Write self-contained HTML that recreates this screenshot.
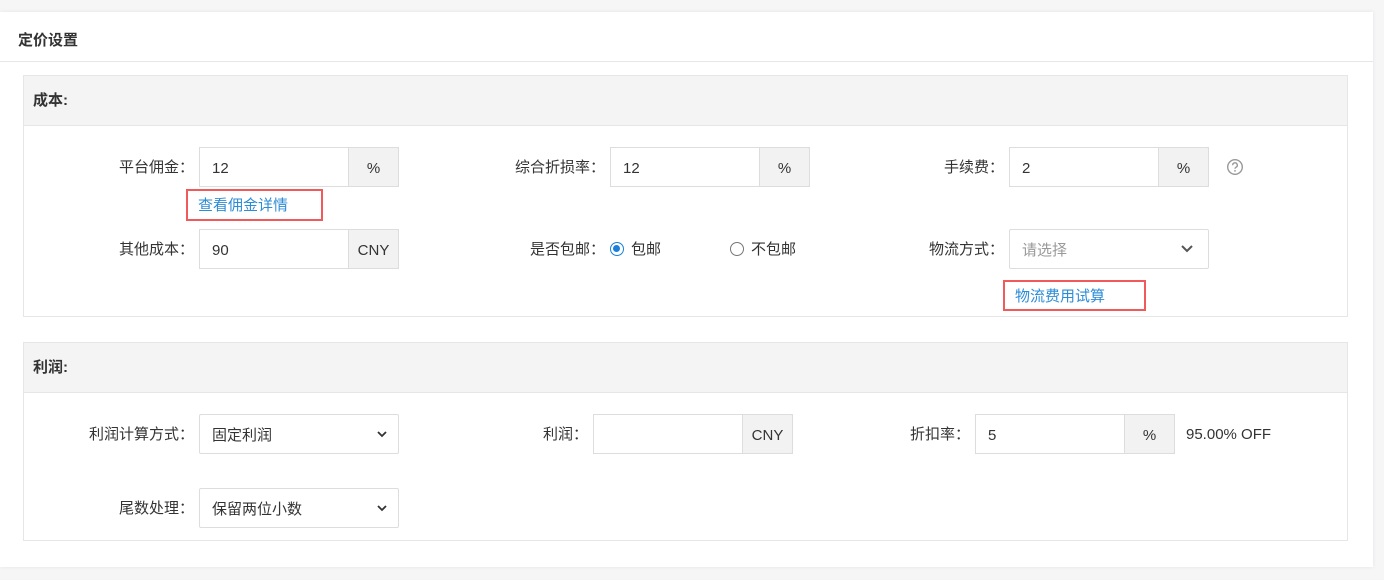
<!DOCTYPE html>
<html><head><meta charset="utf-8"><style>
*{box-sizing:border-box;margin:0;padding:0}
body{width:1384px;height:580px;background:#f6f6f7;font-family:"Liberation Sans","Noto Sans CJK SC",sans-serif;font-size:15px;color:#333;position:relative;overflow:hidden}
.card{position:absolute;left:0;top:12px;width:1373px;height:555px;background:#fff;box-shadow:0 0 4px rgba(0,0,0,.08)}
.title{position:absolute;left:18px;top:17px;font-size:15px;font-weight:bold;color:#333}
.hl{position:absolute;left:0;top:49px;width:1373px;height:1px;background:#e6e6e6}
.sec{position:absolute;left:23px;width:1325px;border:1px solid #e6e6e6;background:#fff}
.sh{height:50px;background:#f4f4f4;border-bottom:1px solid #e6e6e6;font-weight:bold;font-size:15px;line-height:49px;padding-left:9px}
.a{position:absolute}
.lbl{position:absolute;text-align:right;width:200px;line-height:42px}
.in{position:absolute;height:40px;border:1px solid #ddd;background:#fff;line-height:41px;padding-left:12px}
.ad{position:absolute;right:-1px;top:-1px;width:51px;height:40px;border:1px solid #ddd;background:#f2f2f2;text-align:center;line-height:41px;border-radius:0 2px 2px 0}
.sel{position:absolute;height:40px;border:1px solid #ddd;background:#fff;line-height:41px;padding-left:12px;border-radius:2px}
.chev{position:absolute;right:10px;top:13px}
.link{position:absolute;border:2px solid #f05a5a;color:#2d8cd6;line-height:29px;padding-left:10px}
.radio{position:absolute;width:14px;height:14px;border-radius:50%}
</style></head><body>
<div class="card">
<div class="title">定价设置</div>
<div class="hl"></div>
</div>

<div class="sec" style="top:75px;height:242px"><div class="sh">成本:</div></div>
<div class="sec" style="top:342px;height:199px"><div class="sh">利润:</div></div>

<div class="lbl" style="left:-6px;top:147px">平台佣金：</div>
<div class="in" style="left:199px;top:147px;width:200px">12<div class="ad">%</div></div>
<div class="lbl" style="left:405px;top:147px">综合折损率：</div>
<div class="in" style="left:610px;top:147px;width:200px">12<div class="ad">%</div></div>
<div class="lbl" style="left:804px;top:147px">手续费：</div>
<div class="in" style="left:1009px;top:147px;width:200px">2<div class="ad">%</div></div>
<svg class="a" style="left:1226px;top:158px" width="18" height="18" viewBox="0 0 18 18"><circle cx="9" cy="9" r="7.3" fill="none" stroke="#999" stroke-width="1.4"/><path d="M6.7 7.2a2.3 2.3 0 1 1 3.3 2c-.7.4-1 .8-1 1.6" fill="none" stroke="#999" stroke-width="1.4"/><circle cx="9" cy="12.9" r=".9" fill="#999"/></svg>

<div class="link" style="left:186px;top:189px;width:137px;height:32px">查看佣金详情</div>

<div class="lbl" style="left:-6px;top:229px">其他成本：</div>
<div class="in" style="left:199px;top:229px;width:200px">90<div class="ad">CNY</div></div>
<div class="lbl" style="left:405px;top:229px">是否包邮：</div>
<div class="radio" style="left:610px;top:242px;border:1.5px solid #1a7fdc;background:#fff"><div style="position:absolute;left:2px;top:2px;width:7px;height:7px;border-radius:50%;background:#1a7fdc"></div></div>
<div class="a" style="left:631px;top:229px;line-height:42px">包邮</div>
<div class="radio" style="left:730px;top:242px;border:1.3px solid #777"></div>
<div class="a" style="left:751px;top:229px;line-height:42px">不包邮</div>
<div class="lbl" style="left:804px;top:229px">物流方式：</div>
<div class="sel" style="left:1009px;top:229px;width:200px;color:#999">请选择<svg class="chev" style="right:14px;top:13px" width="14" height="12" viewBox="0 0 14 12"><path d="M2 3l5 5 5-5" fill="none" stroke="#555" stroke-width="2"/></svg></div>
<div class="link" style="left:1003px;top:280px;width:143px;height:31px">物流费用试算</div>

<div class="lbl" style="left:-6px;top:414px">利润计算方式：</div>
<div class="sel" style="left:199px;top:414px;width:200px">固定利润<svg class="chev" width="12" height="12" viewBox="0 0 12 12"><path d="M2 4l4 4 4-4" fill="none" stroke="#333" stroke-width="1.8"/></svg></div>
<div class="lbl" style="left:388px;top:414px">利润：</div>
<div class="in" style="left:593px;top:414px;width:200px"><div class="ad">CNY</div></div>
<div class="lbl" style="left:770px;top:414px">折扣率：</div>
<div class="in" style="left:975px;top:414px;width:200px">5<div class="ad">%</div></div>
<div class="a" style="left:1186px;top:414px;line-height:42px">95.00% OFF</div>

<div class="lbl" style="left:-6px;top:488px">尾数处理：</div>
<div class="sel" style="left:199px;top:488px;width:200px">保留两位小数<svg class="chev" width="12" height="12" viewBox="0 0 12 12"><path d="M2 4l4 4 4-4" fill="none" stroke="#333" stroke-width="1.8"/></svg></div>
</body></html>
